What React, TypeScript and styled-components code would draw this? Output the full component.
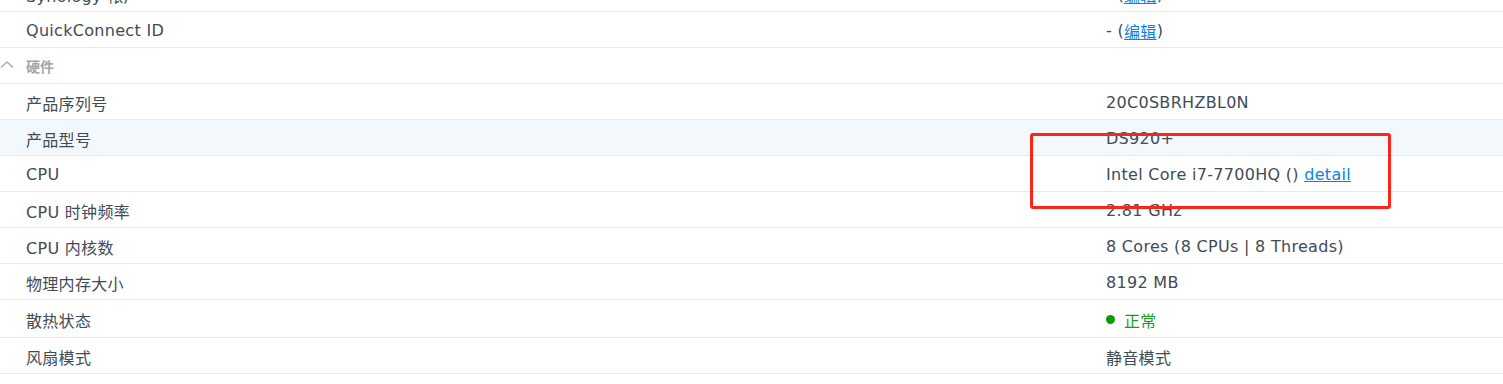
import React from "react";
import styled, { createGlobalStyle } from "styled-components";

const GlobalStyle = createGlobalStyle`
  html, body {
    margin: 0;
    padding: 0;
    background: #ffffff;
    overflow: hidden;
  }
  body {
    font-family: "DejaVu Sans", "Noto Sans CJK SC", sans-serif;
    color: #414b55;
  }
`;

const Page = styled.div`
  position: relative;
  width: 1503px;
  height: 384px;
  overflow: hidden;
`;

const List = styled.div`
  display: flex;
  flex-direction: column;
  margin-top: -24px;
`;

const Row = styled.div<{ $active?: boolean; $tall?: boolean }>`
  display: grid;
  grid-template-columns: 1080px 1fr;
  align-items: center;
  box-sizing: border-box;
  height: ${(p) => (p.$tall ? "38px" : "36px")};
  padding: 2px 0 0 26px;
  border-bottom: 1px solid #e6e8ee;
  background: ${(p) => (p.$active ? "#f3f8fd" : "#ffffff")};
  font-size: 16px;
  letter-spacing: 0.3px;
`;

const Label = styled.div`
  color: #414b55;
  white-space: nowrap;
`;

const Value = styled.div`
  display: flex;
  align-items: center;
  color: #414b55;
  white-space: nowrap;
`;

const Link = styled.a`
  color: #0a84e0;
  text-decoration: underline;
  cursor: pointer;
`;

const SectionRow = styled.div`
  position: relative;
  display: flex;
  align-items: center;
  box-sizing: border-box;
  height: 36px;
  padding-left: 26px;
  border-bottom: 1px solid #e6e8ee;
  font-size: 14px;
  font-weight: 600;
  color: #a0a6ae;
`;

const Chevron = styled.svg`
  position: absolute;
  left: 0;
  top: 12px;
`;

const StatusDot = styled.span`
  display: inline-block;
  width: 9px;
  height: 9px;
  border-radius: 50%;
  background: #0a9a0a;
  margin-right: 9px;
`;

const StatusText = styled.span`
  color: #17a017;
`;

const Highlight = styled.div`
  position: absolute;
  left: 1030px;
  top: 133px;
  width: 355px;
  height: 70px;
  border: 3px solid #ff2418;
  border-radius: 3px;
  pointer-events: none;
`;

const rows: { label: string; value: React.ReactNode; active?: boolean; tall?: boolean }[] = [
  { label: "产品序列号", value: "20C0SBRHZBL0N" },
  { label: "产品型号", value: "DS920+", active: true },
  {
    label: "CPU",
    value: (
      <>
        Intel Core i7-7700HQ ()&nbsp;<Link>detail</Link>
      </>
    ),
  },
  { label: "CPU 时钟频率", value: "2.81 GHz" },
  { label: "CPU 内核数", value: "8 Cores (8 CPUs | 8 Threads)" },
  { label: "物理内存大小", value: "8192 MB" },
  {
    label: "散热状态",
    tall: true,
    value: (
      <>
        <StatusDot />
        <StatusText>正常</StatusText>
      </>
    ),
  },
  { label: "风扇模式", value: "静音模式" },
];

export default function App() {
  return (
    <Page>
      <GlobalStyle />
      <List>
        <Row>
          <Label>Synology 帐户</Label>
          <Value>
            -&nbsp;(<Link>编辑</Link>)
          </Value>
        </Row>
        <Row>
          <Label>QuickConnect ID</Label>
          <Value>
            -&nbsp;(<Link>编辑</Link>)
          </Value>
        </Row>
        <SectionRow>
          <Chevron width="14" height="9" viewBox="0 0 14 9">
            <path d="M1 7.5 L7 2 L13 7.5" fill="none" stroke="#a9aeb5" strokeWidth="1.6" />
          </Chevron>
          硬件
        </SectionRow>
        {rows.map((r) => (
          <Row key={r.label} $active={r.active} $tall={r.tall}>
            <Label>{r.label}</Label>
            <Value>{r.value}</Value>
          </Row>
        ))}
      </List>
      <Highlight />
    </Page>
  );
}
